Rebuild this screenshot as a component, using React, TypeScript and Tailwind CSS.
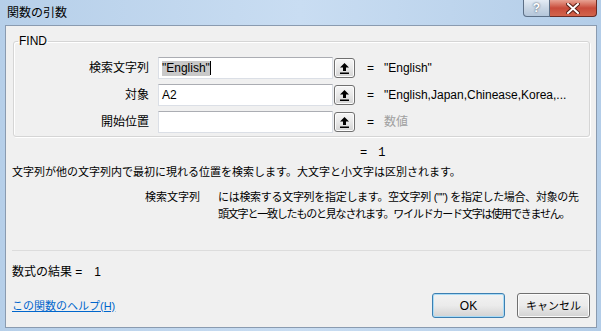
import React from 'react';

// Excel "関数の引数" dialog (FIND), Windows 7 look

const font = "font-['Liberation_Sans','Noto_Sans_CJK_JP',sans-serif]";

const RefButton: React.FC = () => (
    <div className="ml-[1px] w-[21px] h-[20px] border border-[#707070] rounded-[3px] bg-gradient-to-b from-[#f6f6f6] via-[#e8e8e8] to-[#d4d4d4] shadow-[inset_0_0_0_1px_#fcfcfc] flex items-center justify-center">
        <svg width="9" height="11" viewBox="0 0 9 11">
            <path d="M4.5 0 L9 4.5 H6 V8 H3 V4.5 H0 Z" fill="#000" />
            <rect x="0" y="9.5" width="9" height="1.5" fill="#000" />
        </svg>
    </div>
);

interface ArgRowProps {
    label: string;
    value?: React.ReactNode;
    result: React.ReactNode;
    dim?: boolean;
}

const ArgRow: React.FC<ArgRowProps> = ({ label, value, result, dim }) => (
    <div className="flex items-center h-[22px]">
        <div className="w-[135px] text-right text-[12px] leading-[16px] text-black">{label}</div>
        <div className="ml-[9px] w-[175px] h-[22px] bg-white border border-[#dbdfe6] border-t-[#abadb3] flex items-center pl-[3px] text-[12px] text-black">
            {value}
        </div>
        <RefButton />
        <span className="ml-[12px] w-[17px] text-[12px] text-black">=</span>
        <span className={`text-[12px] whitespace-nowrap ${dim ? 'text-[#a0a0a0]' : 'text-black'}`}>{result}</span>
    </div>
);

const App: React.FC = () => {
    return (
        <div className={`w-[601px] h-[331px] flex flex-col bg-gradient-to-r from-[#b6cfe9] via-[#c9ddf2] to-[#b3cde8] ${font}`}>
            {/* Title bar */}
            <div className="h-[25px] flex items-start shrink-0">
                <div className="pl-[7px] pt-[4px] text-[12px] leading-[16px] text-black font-['Noto_Sans_CJK_JP',sans-serif]">関数の引数</div>
                <div className="ml-auto mr-[4px] flex">
                    <div className="w-[27px] h-[17px] border border-[#5c6f86] border-t-0 rounded-bl-[4px] bg-gradient-to-b from-[#e4ecf5] via-[#c9d6e4] to-[#b4c6da] flex items-center justify-center text-[12px] font-bold text-white [text-shadow:0_0_2px_#2c3b4d]">
                        ?
                    </div>
                    <div className="w-[47px] h-[17px] border border-l-0 border-[#6a2b24] border-t-0 rounded-br-[4px] bg-gradient-to-b from-[#e7a293] via-[#c84b3a] to-[#d2644c] flex items-center justify-center">
                        <svg width="14" height="11" viewBox="0 0 14 11">
                            <path d="M2 1 L12 10 M12 1 L2 10" stroke="#5a2018" strokeWidth="4" strokeLinecap="square" />
                            <path d="M2 1 L12 10 M12 1 L2 10" stroke="#fff" strokeWidth="2" strokeLinecap="square" />
                        </svg>
                    </div>
                </div>
            </div>

            {/* Client area */}
            <div className="flex-1 ml-[5px] mr-[4px] mb-[3px] border border-[#8a9bb0] bg-[#f0f0f0] flex flex-col text-[11px] leading-[16px] text-black">
                <fieldset className="mt-[7px] ml-[7px] mr-[6px] border border-[#d5d5d5] rounded-[3px] shadow-[inset_1px_1px_0_#ffffff,1px_1px_0_#ffffff] pt-[8px] pb-[3px]">
                    <legend className="ml-[4px] px-[1px] text-[12px] leading-[16px] text-black">FIND</legend>
                    <div className="flex flex-col gap-[5px]">
                        <ArgRow
                            label="検索文字列"
                            value={
                                <>
                                    <span className="bg-[#c9c9c9] leading-[15px]">"English"</span>
                                    <span className="w-px h-[14px] bg-black" />
                                </>
                            }
                            result={'"English"'}
                        />
                        <ArgRow label="対象" value="A2" result={'"English,Japan,Chinease,Korea,...'} />
                        <ArgRow label="開始位置" result="数値" dim />
                    </div>
                </fieldset>

                <div className="mt-[8px] ml-[354px] flex text-[12px] leading-[16px] font-['Liberation_Mono',monospace]">
                    <span>=</span>
                    <span className="ml-[11px]">1</span>
                </div>

                <div className="mt-[3px] ml-[6px]">
                    文字列が他の文字列内で最初に現れる位置を検索します。大文字と小文字は区別されます。
                </div>

                <div className="mt-[9px] flex leading-[17px]">
                    <div className="w-[194px] shrink-0 text-right">検索文字列</div>
                    <div className="ml-[18px] whitespace-nowrap">
                        <div className="tracking-[-0.3px]">には検索する文字列を指定します。空文字列 ("") を指定した場合、対象の先</div>
                        <div className="tracking-[-1.2px]">頭文字と一致したものと見なされます。ワイルドカード文字は使用できません。</div>
                    </div>
                </div>

                <div className="mt-[27px] ml-[6px] mr-[5px] h-px bg-[#dcdcdc]" />

                <div className="mt-[13px] ml-[6px] flex text-[12px]">
                    <span>数式の結果 =</span>
                    <span className="ml-[12px]">1</span>
                </div>

                <div className="mt-[13px] ml-[6px] mr-[6px] flex items-center h-[25px]">
                    <a className="text-[#0066cc] underline">この関数のヘルプ(H)</a>
                    <div className="ml-auto flex gap-[12px]">
                        <button className="w-[73px] h-[25px] border border-[#3c7fb1] rounded-[3px] bg-gradient-to-b from-[#f2f2f2] via-[#ebebeb] to-[#d2d2d2] shadow-[inset_0_0_0_1px_#a9dbf6] text-[12px] text-black">
                            OK
                        </button>
                        <button className="w-[73px] h-[25px] border border-[#707070] rounded-[3px] bg-gradient-to-b from-[#f2f2f2] via-[#ebebeb] to-[#d2d2d2] shadow-[inset_0_0_0_1px_#fbfbfb] text-[11px] text-black">
                            キャンセル
                        </button>
                    </div>
                </div>
            </div>
        </div>
    );
};

export default App;
